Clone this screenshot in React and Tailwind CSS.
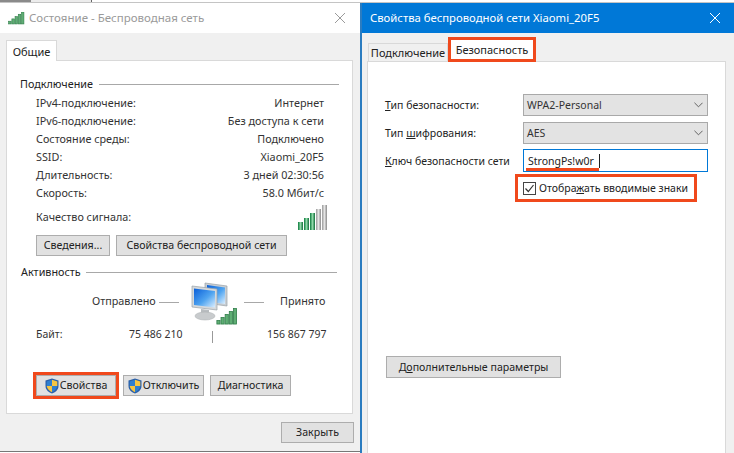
import React from 'react'

const FONT = "font-['Noto_Sans',sans-serif]"

function Bars({ className, count = 5, green = 5, fill = '#5fae74', stroke = '#2f7d49' }) {
  // small stepped signal bars, used in the title bar and on the computers icon
  const bars = Array.from({ length: count })
  return (
    <svg viewBox="0 0 25 18" className={className}>
      {bars.map((_, i) => {
        const h = 4 + i * 3.4
        return (
          <rect
            key={i}
            x={1 + i * 4.7}
            y={17 - h}
            width="3.6"
            height={h}
            fill={i < green ? fill : '#b5b5b5'}
            stroke={i < green ? stroke : '#8a8a8a'}
            strokeWidth="0.9"
          />
        )
      })}
    </svg>
  )
}

function Quality() {
  return (
    <svg viewBox="0 0 30 27" className="w-[30px] h-[27px]">
      <defs>
        <linearGradient id="gb" x1="0" y1="0" x2="1" y2="0">
          <stop offset="0" stopColor="#0b7a3c" />
          <stop offset="0.5" stopColor="#8fd8a8" />
          <stop offset="1" stopColor="#0f6d38" />
        </linearGradient>
        <linearGradient id="gg" x1="0" y1="0" x2="1" y2="0">
          <stop offset="0" stopColor="#9a9a9a" />
          <stop offset="0.5" stopColor="#e4e4e4" />
          <stop offset="1" stopColor="#8a8a8a" />
        </linearGradient>
      </defs>
      <rect x="1" y="18" width="5" height="8" fill="url(#gb)" />
      <rect x="7" y="14" width="5" height="12" fill="url(#gb)" />
      <rect x="13" y="9" width="5" height="17" fill="url(#gb)" />
      <rect x="19" y="5" width="5" height="21" fill="url(#gg)" />
      <rect x="25" y="1" width="5" height="25" fill="url(#gg)" />
    </svg>
  )
}

function Shield() {
  return (
    <svg viewBox="0 0 14 16" className="w-[14px] h-[16px] shrink-0">
      <path d="M7 .5 L13.5 2.5 V8 C13.5 12 10 14.5 7 15.5 C4 14.5 .5 12 .5 8 V2.5 Z" fill="#2a5fa8" />
      <path d="M7 1.8 V8 H1.7 V3.4 Z" fill="#2f7fd0" />
      <path d="M7 1.8 L12.3 3.4 V8 H7 Z" fill="#f5c542" />
      <path d="M7 8 H1.7 C2 11 4.6 13.2 7 14.2 Z" fill="#f5c542" />
      <path d="M7 8 H12.3 C12 11 9.4 13.2 7 14.2 Z" fill="#2f7fd0" />
    </svg>
  )
}

function Computers() {
  return (
    <svg viewBox="0 0 48 44" className="w-[48px] h-[44px]">
      <defs>
        <linearGradient id="sc" x1="0" y1="0" x2="1" y2="1">
          <stop offset="0" stopColor="#0a5fd8" />
          <stop offset="0.55" stopColor="#4fa4f0" />
          <stop offset="1" stopColor="#dcefff" />
        </linearGradient>
      </defs>
      <path d="M15 1 L37 4 V24 L15 21 Z" fill="#c9ced3" stroke="#9aa2a8" strokeWidth="0.7" />
      <path d="M17 3 L35 5.5 V22 L17 19.5 Z" fill="url(#sc)" />
      <path d="M2 4 L27 7 V28 L2 25 Z" fill="#d5d9dc" stroke="#9aa2a8" strokeWidth="0.7" />
      <path d="M4 6.5 L25 9 V25.5 L4 23 Z" fill="url(#sc)" />
      <path d="M11 27 L19 28 V31 H11 Z" fill="#b9bdc0" />
      <ellipse cx="15" cy="34" rx="10" ry="4" fill="#c8cbcd" stroke="#a8acaf" strokeWidth="0.5" />
    </svg>
  )
}

function Btn({ children, className = '' }) {
  return (
    <button className={`flex items-center justify-center whitespace-nowrap h-[21px] bg-[#e1e1e1] border border-[#adadad] text-[10.6px] text-[#222] ${className}`}>
      {children}
    </button>
  )
}

function Heading({ children, lineClass }) {
  return (
    <div className="flex items-center h-[18px] text-[10.8px] text-[#222]">
      <span>{children}</span>
      <span className={`h-px bg-[#a8a8a8] ${lineClass}`} />
    </div>
  )
}

function Row({ label, value }) {
  return (
    <div className="flex justify-between h-[18px] items-center text-[10.8px] text-[#333]">
      <span>{label}</span>
      <span>{value}</span>
    </div>
  )
}

function StatusWindow() {
  const rows = [
    ['IPv4-подключение:', 'Интернет'],
    ['IPv6-подключение:', 'Без доступа к сети'],
    ['Состояние среды:', 'Подключено'],
    ['SSID:', 'Xiaomi_20F5'],
    ['Длительность:', '3 дней 02:30:56'],
    ['Скорость:', '58.0 Мбит/с'],
  ]

  return (
    <div className="w-[360px] h-[449px] flex flex-col bg-[#f0f0f0] border-b border-[#777]">
      {/* title bar */}
      <div className="h-[30px] bg-white flex items-center pl-[8px] pr-[12px] shrink-0">
        <Bars className="w-[17px] h-[13px] mr-[4px]" />
        <span className="text-[11.5px] text-[#9a9a9a]">Состояние - Беспроводная сеть</span>
        <svg viewBox="0 0 12 12" className="w-[12px] h-[12px] ml-auto mr-[2px]" stroke="#9a9a9a" strokeWidth="1">
          <path d="M1 1 L11 11 M11 1 L1 11" />
        </svg>
      </div>

      <div className="pl-[6px] pt-[7px]">
        <div className="w-[51px] h-[21px] -mb-px relative bg-white border border-b-0 border-[#d9d9d9] flex items-center justify-center text-[11px] text-[#222]">
          Общие
        </div>
        <div className="w-[347px] h-[354px] bg-white border border-[#d9d9d9] pt-[14px]">
          <div className="pl-[13px]">
            <Heading lineClass="w-[240px] ml-[6px]">Подключение</Heading>
          </div>
          <div className="pl-[29px] pr-[28px] mt-[1px]">
            {rows.map(([l, v]) => (
              <Row key={l} label={l} value={v} />
            ))}
            <div className="flex justify-between items-center h-[27px] mt-[2px] text-[10.8px] text-[#333]">
              <span>Качество сигнала:</span>
              <div className="-mr-[3px]">
                <Quality />
              </div>
            </div>
          </div>
          <div className="flex gap-[6px] pl-[29px] mt-[4px]">
            <Btn className="w-[74px]">Сведения...</Btn>
            <Btn className="w-[171px]">Свойства беспроводной сети</Btn>
          </div>

          <div className="pl-[14px] mt-[7px]">
            <Heading lineClass="w-[251px] ml-[5px]">Активность</Heading>
          </div>
          <div className="flex items-start pl-[85px] mt-[1px] h-[43px] text-[10.8px] text-[#333]">
            <span className="mt-[14px] w-[61px] whitespace-nowrap">Отправлено</span>
            <span className="mt-[20px] ml-[6px] w-[20px] h-px bg-[#a8a8a8]" />
            <div className="relative ml-[11px] w-[48px]">
              <Computers />
              <Bars className="absolute left-[26px] top-[26px] w-[22px] h-[18px]" />
            </div>
            <span className="mt-[20px] ml-[6px] w-[20px] h-px bg-[#a8a8a8]" />
            <span className="mt-[14px] ml-[16px]">Принято</span>
          </div>
          <div className="flex items-center pl-[29px] h-[16px] mt-[1px] text-[10.5px] text-[#333]">
            <span className="w-[93px]">Байт:</span>
            <span className="w-[53px] whitespace-nowrap">75 486 210</span>
            <span className="ml-[30px] w-px h-[12px] mt-[5px] bg-[#999]" />
            <span className="ml-[54px] whitespace-nowrap">156 867 797</span>
          </div>

          <div className="flex pl-[29px] mt-[33px]">
            <Btn className="w-[80px] gap-[1px] outline-[3px] outline-[#f0491c]">
              <Shield />
              Свойства
            </Btn>
            <Btn className="w-[81px] ml-[7px] gap-[1px]">
              <Shield />
              Отключить
            </Btn>
            <Btn className="w-[81px] ml-[6px]">Диагностика</Btn>
          </div>
        </div>
        <div className="flex mt-[8px]">
          <Btn className="w-[73px] ml-[275px]">Закрыть</Btn>
        </div>
      </div>
    </div>
  )
}

function Select({ children }) {
  return (
    <div className="w-[185px] h-[22px] bg-[#e3e3e3] border border-[#a9a9a9] flex items-center justify-between pl-[3px] pr-[4px] text-[10.5px] text-[#333]">
      <span>{children}</span>
      <svg viewBox="0 0 10 6" className="w-[9px] h-[6px]" fill="none" stroke="#555" strokeWidth="1">
        <path d="M.5 .5 L5 5 L9.5 .5" />
      </svg>
    </div>
  )
}

function FormRow({ label, children }) {
  return (
    <div className="flex items-center">
      <span className="w-[138px] text-[10.5px] text-[#222] whitespace-nowrap">{label}</span>
      {children}
    </div>
  )
}

function PropsWindow() {
  return (
    <div className="flex-1 h-[450px] flex flex-col bg-[#f0f0f0] border-l-2 border-[#2b7cc0]">
      <div className="h-[30px] bg-[#0078d7] flex items-center pl-[8px] pr-[12px] shrink-0 text-white">
        <span className="text-[11.3px]">Свойства беспроводной сети Xiaomi_20F5</span>
        <svg viewBox="0 0 12 12" className="w-[12px] h-[12px] ml-auto mr-[1px]" stroke="#fff" strokeWidth="1">
          <path d="M1 1 L11 11 M11 1 L1 11" />
        </svg>
      </div>

      <div className="pl-[5px] pt-[5px] flex-1 flex flex-col">
        <div className="flex items-end h-[23px] relative z-10">
          <div className="w-[80px] h-[18px] flex items-center justify-center text-[11px] text-[#222] border border-b-0 border-[#d9d9d9] ml-px">
            Подключение
          </div>
          <div className="w-[88px] h-[25px] -mb-[1px] bg-white border-[3px] border-[#f0491c] flex items-center justify-center text-[11px] text-[#222]">
            Безопасность
          </div>
        </div>
        <div className="w-[359px] flex-1 bg-white border border-[#d9d9d9] border-b-0 pt-[32px] pl-[17px]">
          <div className="flex flex-col gap-[6px]">
            <FormRow label={<><u>Т</u>ип безопасности:</>}>
              <Select>WPA2-Personal</Select>
            </FormRow>
            <FormRow label={<>Тип <u>ш</u>ифрования:</>}>
              <Select>AES</Select>
            </FormRow>
            <FormRow label={<><u>К</u>люч безопасности сети</>}>
              <div className="w-[185px] h-[23px] border border-[#0078d7] -mt-[1px] pl-[4px] flex items-center text-[10.5px] text-[#222]">
                {/* red mark under the key sits over the field */}
                <span className="relative border-r border-[#222] pr-[5px] leading-[14px]">
                  StrongPs!w0r
                  <span className="absolute left-[-2px] right-0 bottom-[-3px] h-[3px] bg-[#f0491c]" />
                </span>
              </div>
            </FormRow>
          </div>
          <div className="ml-[130px] mt-[2px] w-[182px] h-[28px] border-[3px] border-[#f0491c] flex items-center pl-[5px] gap-[3px] text-[10.5px] text-[#222]">
            <svg viewBox="0 0 13 13" className="w-[13px] h-[13px] shrink-0" fill="none">
              <rect x=".5" y=".5" width="12" height="12" stroke="#444" fill="#fff" />
              <path d="M2.5 6.5 L5.3 9.5 L10.5 3" stroke="#333" strokeWidth="1.2" />
            </svg>
            <span className="whitespace-nowrap">Отобра<u>ж</u>ать вводимые знаки</span>
          </div>
          <Btn className="w-[175px] mt-[154px] ml-px h-[22px]">
            <span>Д<u>о</u>полнительные параметры</span>
          </Btn>
        </div>
      </div>
    </div>
  )
}

export default function App() {
  return (
    <div className={`${FONT} w-[734px] h-[453px] overflow-hidden bg-white flex flex-col leading-none`}>
      {/* sliver of the desktop above the windows */}
      <div className="h-[3px] flex shrink-0 bg-white border-b border-[#c4c4c4]">
        <div className="w-[31px] h-[2px] bg-[#8a8a8a]" />
        <div className="w-[61px] h-[2px] bg-[#ececec] border-r border-[#666]" />
      </div>
      <div className="flex">
        <StatusWindow />
        <PropsWindow />
      </div>
    </div>
  )
}
